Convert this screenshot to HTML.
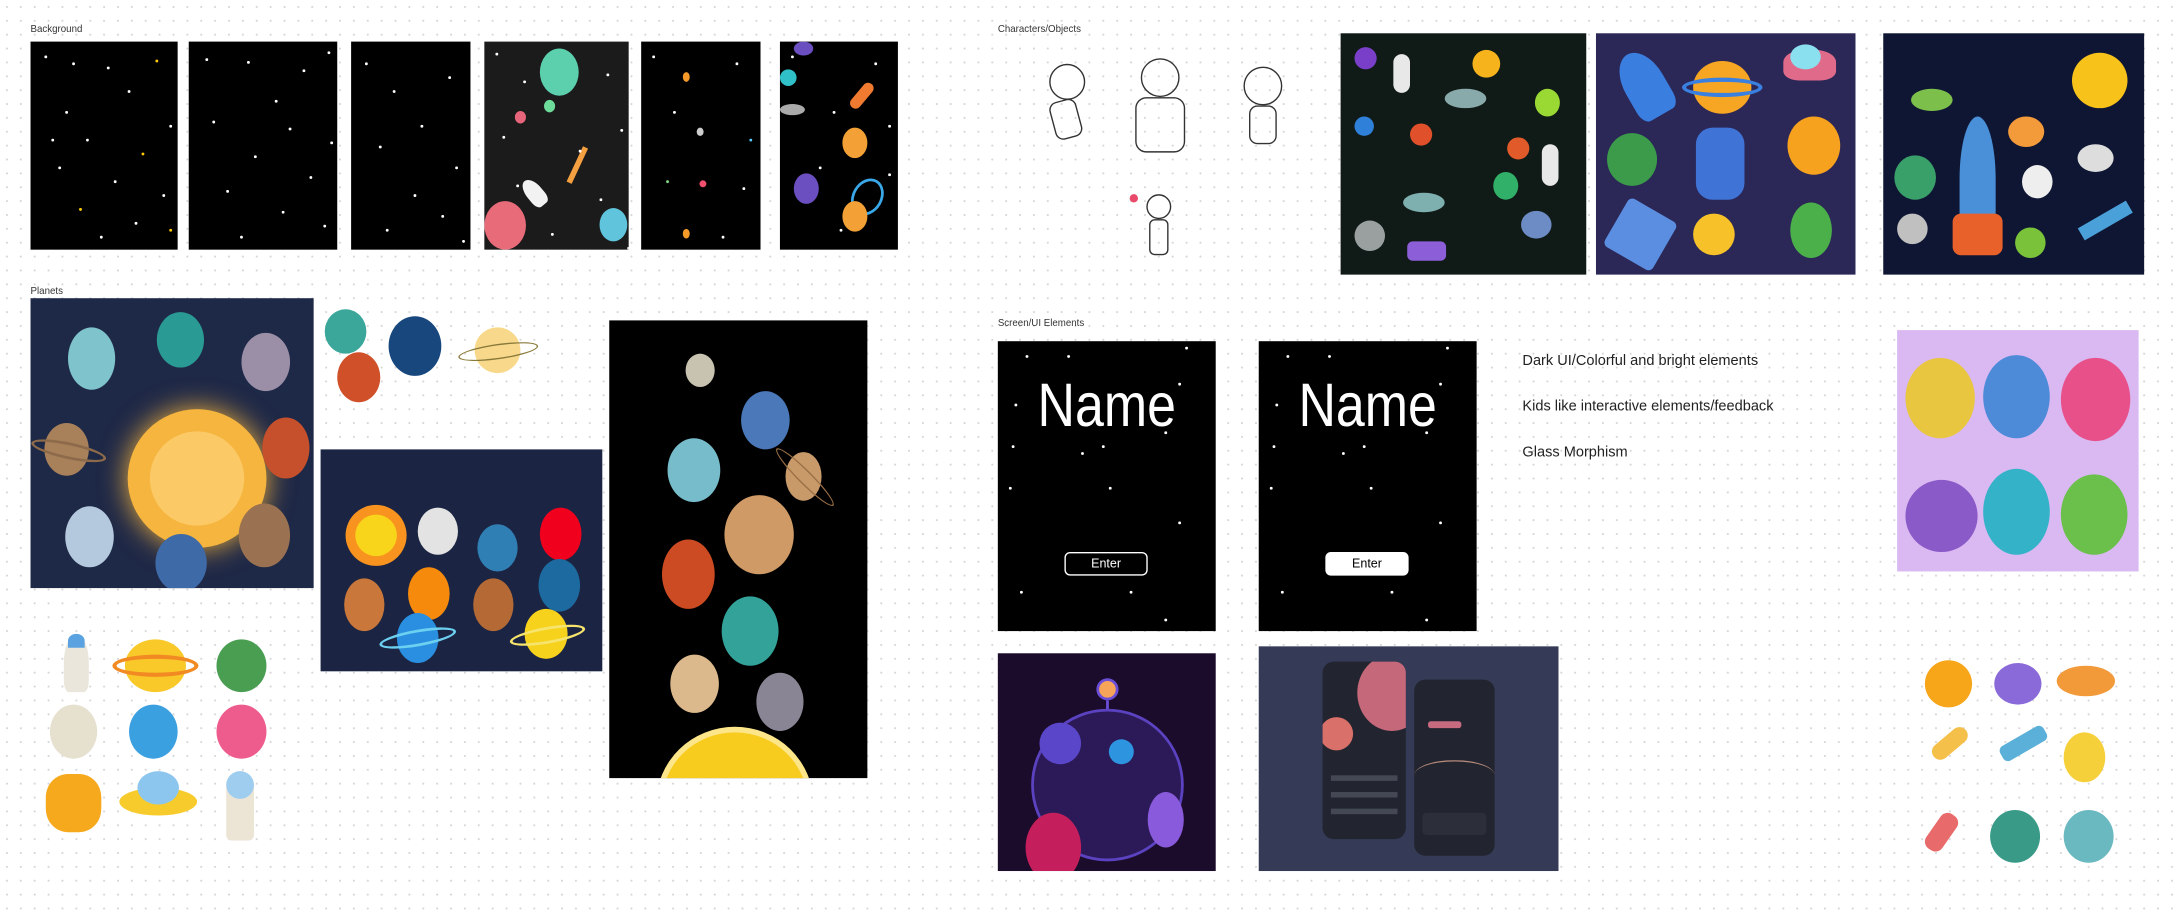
<!DOCTYPE html>
<html><head><meta charset="utf-8"><style>
html,body{margin:0;padding:0;width:2176px;height:914px;overflow:hidden;background:#fff}
#w{position:absolute;left:0;top:0;width:1568px;height:659px;transform:scale(1.3878,1.387);transform-origin:0 0;
background-color:#fff;background-image:radial-gradient(circle,#d6d6d6 0.6px,transparent 0.9px);background-size:10px 10px;font-family:"Liberation Sans",sans-serif}
#w div{position:absolute;box-sizing:border-box}
.lb{font-size:7px;color:#333}
.bk{background:#000;overflow:hidden}
.c{border-radius:50%}
.st{width:1.5px;height:1.5px;background:#fff;border-radius:50%}
.t{font-size:10.5px;color:#222}
</style></head><body><div id="w">

<div class="lb" style="left:22px;top:18px">Background</div>
<div class="lb" style="left:22px;top:207px">Planets</div>
<div class="lb" style="left:719px;top:18px">Characters/Objects</div>
<div class="lb" style="left:719px;top:230px">Screen/UI Elements</div>

<!-- backgrounds -->
<div class="bk" style="left:22px;top:30px;width:106px;height:150px">
 <div class="st" style="left:10px;top:10px;box-shadow:20px 5px #fff,45px 8px #fff,80px 3px #fc0,60px 25px #fff,15px 40px #fff,90px 50px #fff,30px 60px #fff,70px 70px #fc0,10px 80px #fff,50px 90px #fff,85px 100px #fff,25px 110px #fc0,65px 120px #fff,40px 130px #fff,90px 125px #fc0,5px 60px #fff"></div></div>
<div class="bk" style="left:136px;top:30px;width:107px;height:150px">
 <div class="st" style="left:12px;top:12px;box-shadow:30px 2px #fff,70px 8px #fff,88px -5px #fff,50px 30px #fff,5px 45px #fff,90px 60px #fff,35px 70px #fff,75px 85px #fff,15px 95px #fff,55px 110px #fff,85px 120px #fff,25px 128px #fff,60px 50px #fff"></div></div>
<div class="bk" style="left:253px;top:30px;width:86px;height:150px">
 <div class="st" style="left:10px;top:15px;box-shadow:20px 20px #fff,60px 10px #fff,40px 45px #fff,10px 60px #fff,65px 75px #fff,35px 95px #fff,55px 110px #fff,15px 120px #fff,70px 128px #fff"></div></div>
<div class="bk" style="left:349px;top:30px;width:104px;height:150px;background:#1b1b1b">
 <div class="c" style="left:40px;top:5px;width:28px;height:34px;background:#5ccfad"></div>
 <div class="c" style="left:43px;top:42px;width:8px;height:9px;background:#6ddc9a"></div>
 <div class="c" style="left:22px;top:50px;width:8px;height:9px;background:#e7657a"></div>
 <div class="c" style="left:83px;top:120px;width:20px;height:24px;background:#5fc4dc"></div>
 <div class="c" style="left:0px;top:115px;width:30px;height:35px;background:#e86b7a"></div>
 <div style="left:30px;top:98px;width:12px;height:22px;background:#f2f2f2;border-radius:50% 50% 30% 30%;transform:rotate(-40deg)"></div>
 <div style="left:65px;top:75px;width:4px;height:28px;background:#f5a040;transform:rotate(25deg)"></div>
 <div class="st" style="left:8px;top:8px;box-shadow:20px 20px #fff,80px 15px #fff,5px 60px #fff,60px 70px #fff,90px 55px #fff,15px 95px #fff,75px 105px #fff,40px 130px #fff,95px 140px #fff"></div></div>
<div class="bk" style="left:462px;top:30px;width:86px;height:150px">
 <div class="c" style="left:30px;top:22px;width:5px;height:7px;background:#f59a28"></div>
 <div class="c" style="left:42px;top:100px;width:5px;height:5px;background:#f0506e"></div>
 <div class="c" style="left:30px;top:135px;width:5px;height:7px;background:#f59a28"></div>
 <div class="c" style="left:40px;top:62px;width:5px;height:6px;background:#ccc"></div>
 <div class="st" style="left:8px;top:10px;box-shadow:60px 5px #fff,15px 40px #fff,70px 60px #5cf,10px 90px #8d8,65px 95px #fff,50px 130px #fff"></div></div>
<div class="bk" style="left:562px;top:30px;width:85px;height:150px">
 <div class="c" style="left:0px;top:20px;width:12px;height:12px;background:#2fc0c8"></div>
 <div class="c" style="left:45px;top:62px;width:18px;height:22px;background:#f3a137"></div>
 <div class="c" style="left:10px;top:95px;width:18px;height:22px;background:#6b4ec0"></div>
 <div class="c" style="left:52px;top:98px;width:22px;height:28px;border:2px solid #3aa8e8;transform:rotate(30deg)"></div>
 <div class="c" style="left:45px;top:115px;width:18px;height:22px;background:#f3a137"></div>
 <div class="c" style="left:10px;top:0px;width:14px;height:10px;background:#6b4ec0"></div>
 <div style="left:55px;top:28px;width:8px;height:22px;background:#f07a30;transform:rotate(40deg);border-radius:4px"></div>
 <div style="left:0px;top:45px;width:18px;height:8px;background:#aaa;border-radius:50%"></div>
 <div class="st" style="left:8px;top:10px;box-shadow:60px 5px #fff,30px 40px #fff,70px 50px #fff,20px 80px #fff,70px 85px #fff,35px 125px #fff"></div></div>

<!-- planets big -->
<div style="left:22px;top:215px;width:204px;height:209px;background:#1e2847;overflow:hidden">
 <div class="c" style="left:27px;top:21px;width:34px;height:45px;background:#7fc3cc"></div>
 <div class="c" style="left:91px;top:10px;width:34px;height:40px;background:#2a9a94"></div>
 <div class="c" style="left:152px;top:25px;width:35px;height:42px;background:#9a8fa7"></div>
 <div class="c" style="left:70px;top:80px;width:100px;height:100px;background:#f6b53e;box-shadow:0 0 20px #f6b53e"></div>
 <div class="c" style="left:86px;top:96px;width:68px;height:68px;background:#fbc966"></div>
 <div class="c" style="left:10px;top:90px;width:32px;height:38px;background:#a8805a"></div>
 <div class="c" style="left:0px;top:104px;width:55px;height:12px;border:2px solid #8d6b4a;transform:rotate(12deg)"></div>
 <div class="c" style="left:167px;top:86px;width:34px;height:44px;background:#c7502c"></div>
 <div class="c" style="left:25px;top:150px;width:35px;height:44px;background:#b4c9dd"></div>
 <div class="c" style="left:90px;top:170px;width:37px;height:42px;background:#3f6aa8"></div>
 <div class="c" style="left:150px;top:148px;width:37px;height:46px;background:#9b7251"></div>
</div>
<div class="c" style="left:234px;top:223px;width:30px;height:32px;background:#3aa79a"></div>
<div class="c" style="left:280px;top:228px;width:38px;height:43px;background:#17477d"></div>
<div class="c" style="left:243px;top:254px;width:31px;height:36px;background:#d0502a"></div>
<div class="c" style="left:342px;top:236px;width:33px;height:33px;background:#f8d98c"></div>
<div class="c" style="left:330px;top:248px;width:58px;height:11px;border:1.5px solid #8a7a3a;transform:rotate(-8deg)"></div>

<div style="left:231px;top:324px;width:203px;height:160px;background:#1b2543;overflow:hidden">
 <div class="c" style="left:18px;top:40px;width:44px;height:44px;background:#f7931e"></div>
 <div class="c" style="left:25px;top:47px;width:30px;height:30px;background:#f8d41a"></div>
 <div class="c" style="left:70px;top:42px;width:29px;height:34px;background:#e3e3e3"></div>
 <div class="c" style="left:113px;top:54px;width:29px;height:34px;background:#2f7fb5"></div>
 <div class="c" style="left:158px;top:42px;width:30px;height:38px;background:#f0001c"></div>
 <div class="c" style="left:63px;top:85px;width:30px;height:38px;background:#f58a0c"></div>
 <div class="c" style="left:17px;top:93px;width:29px;height:38px;background:#c9773a"></div>
 <div class="c" style="left:110px;top:93px;width:29px;height:38px;background:#b56a35"></div>
 <div class="c" style="left:157px;top:79px;width:30px;height:38px;background:#1d6aa0"></div>
 <div class="c" style="left:55px;top:118px;width:30px;height:36px;background:#2a8fe0"></div>
 <div class="c" style="left:42px;top:130px;width:56px;height:12px;border:2px solid #6cd0f0;transform:rotate(-10deg)"></div>
 <div class="c" style="left:147px;top:115px;width:31px;height:36px;background:#f6d21c"></div>
 <div class="c" style="left:136px;top:128px;width:55px;height:12px;border:2px solid #f6e46c;transform:rotate(-10deg)"></div>
</div>

<div class="bk" style="left:439px;top:231px;width:186px;height:330px">
 <div class="c" style="left:55px;top:24px;width:21px;height:24px;background:#c8c2b0"></div>
 <div class="c" style="left:95px;top:51px;width:35px;height:42px;background:#4a78b8"></div>
 <div class="c" style="left:42px;top:85px;width:38px;height:46px;background:#76bccb"></div>
 <div class="c" style="left:127px;top:95px;width:26px;height:35px;background:#c89a6a"></div>
 <div class="c" style="left:112px;top:108px;width:58px;height:10px;border:1.5px solid #9b6f45;transform:rotate(45deg)"></div>
 <div class="c" style="left:83px;top:126px;width:50px;height:57px;background:#cf9a65"></div>
 <div class="c" style="left:38px;top:158px;width:38px;height:50px;background:#cc4b22"></div>
 <div class="c" style="left:81px;top:199px;width:41px;height:50px;background:#33a39a"></div>
 <div class="c" style="left:44px;top:241px;width:35px;height:42px;background:#dcb98d"></div>
 <div class="c" style="left:106px;top:254px;width:34px;height:42px;background:#8a8595"></div>
 <div class="c" style="left:34px;top:293px;width:113px;height:110px;background:#f8cc1e;border:4px solid #fde58a"></div>
</div>

<!-- small sticker grid -->
<div style="left:46px;top:457px;width:18px;height:42px;background:#eae6dc;border-radius:50% 50% 20% 20%"></div>
<div style="left:49px;top:457px;width:12px;height:10px;background:#5aa3e0;border-radius:50% 50% 0 0"></div>
<div class="c" style="left:90px;top:461px;width:44px;height:38px;background:#f9c929"></div>
<div class="c" style="left:81px;top:472px;width:62px;height:16px;border:3px solid #f28a23"></div>
<div class="c" style="left:156px;top:461px;width:36px;height:38px;background:#4a9e52"></div>
<div class="c" style="left:36px;top:508px;width:34px;height:39px;background:#e6e0cf"></div>
<div class="c" style="left:93px;top:508px;width:35px;height:39px;background:#3aa0e0"></div>
<div class="c" style="left:156px;top:508px;width:36px;height:39px;background:#ee5c8e"></div>
<div style="left:33px;top:558px;width:40px;height:42px;background:#f6a91c;border-radius:40%"></div>
<div class="c" style="left:86px;top:568px;width:56px;height:20px;background:#f7cb2c"></div>
<div class="c" style="left:99px;top:556px;width:30px;height:24px;background:#8cc6ee"></div>
<div style="left:163px;top:556px;width:20px;height:50px;background:#ece5d5;border-radius:10px 10px 4px 4px"></div>
<div class="c" style="left:163px;top:556px;width:20px;height:20px;background:#9fcdf0"></div>

<!-- characters -->
<div class="c" style="left:756px;top:46px;width:26px;height:26px;border:1.2px solid #333;background:#fff"></div>
<div style="left:758px;top:72px;width:20px;height:28px;border:1.2px solid #333;border-radius:6px;transform:rotate(-15deg)"></div>
<div class="c" style="left:822px;top:42px;width:28px;height:28px;border:1.2px solid #333"></div>
<div style="left:818px;top:70px;width:36px;height:40px;border:1.2px solid #333;border-radius:8px"></div>
<div class="c" style="left:896px;top:48px;width:28px;height:28px;border:1.2px solid #333"></div>
<div style="left:900px;top:76px;width:20px;height:28px;border:1.2px solid #333;border-radius:6px"></div>
<div class="c" style="left:826px;top:140px;width:18px;height:18px;border:1.5px solid #333;background:#fff"></div>
<div style="left:828px;top:158px;width:14px;height:26px;border:1.2px solid #333;border-radius:4px"></div>
<div class="c" style="left:814px;top:140px;width:6px;height:6px;background:#e94a6b"></div>

<div style="left:966px;top:24px;width:177px;height:174px;background:#101a17;overflow:hidden">
 <div class="c" style="left:10px;top:10px;width:16px;height:16px;background:#7a3fc8"></div>
 <div style="left:38px;top:15px;width:12px;height:28px;background:#e8e8e8;border-radius:6px"></div>
 <div class="c" style="left:95px;top:12px;width:20px;height:20px;background:#f6b31c"></div>
 <div class="c" style="left:75px;top:40px;width:30px;height:14px;background:#8aa"></div>
 <div class="c" style="left:10px;top:60px;width:14px;height:14px;background:#2f80d8"></div>
 <div class="c" style="left:50px;top:65px;width:16px;height:16px;background:#e0502a"></div>
 <div class="c" style="left:140px;top:40px;width:18px;height:20px;background:#9ad834"></div>
 <div class="c" style="left:120px;top:75px;width:16px;height:16px;background:#e15a2a"></div>
 <div style="left:145px;top:80px;width:12px;height:30px;background:#e8e8e8;border-radius:6px"></div>
 <div class="c" style="left:45px;top:115px;width:30px;height:14px;background:#7fb0b0"></div>
 <div class="c" style="left:110px;top:100px;width:18px;height:20px;background:#31b06a"></div>
 <div class="c" style="left:130px;top:128px;width:22px;height:20px;background:#6d8cc6"></div>
 <div class="c" style="left:10px;top:135px;width:22px;height:22px;background:#9aa0a0"></div>
 <div style="left:48px;top:150px;width:28px;height:14px;background:#8c5fd8;border-radius:4px"></div>
</div>
<div style="left:1150px;top:24px;width:187px;height:174px;background:#2b2756;overflow:hidden">
 <div style="left:20px;top:12px;width:30px;height:50px;background:#3a7ee0;border-radius:50% 50% 20% 20%;transform:rotate(-30deg)"></div>
 <div class="c" style="left:70px;top:20px;width:42px;height:38px;background:#f7a623"></div>
 <div class="c" style="left:62px;top:32px;width:58px;height:14px;border:3px solid #3a80e0"></div>
 <div style="left:135px;top:12px;width:38px;height:22px;background:#e06a8a;border-radius:40% 40% 30% 30%"></div>
 <div class="c" style="left:140px;top:8px;width:22px;height:18px;background:#8be0f0"></div>
 <div class="c" style="left:8px;top:72px;width:36px;height:38px;background:#3b9b4a"></div>
 <div style="left:72px;top:68px;width:35px;height:52px;background:#3f73d6;border-radius:12px"></div>
 <div class="c" style="left:138px;top:60px;width:38px;height:42px;background:#f6a21e"></div>
 <div style="left:12px;top:125px;width:40px;height:40px;background:#5b8ee0;transform:rotate(30deg);border-radius:4px"></div>
 <div class="c" style="left:70px;top:130px;width:30px;height:30px;background:#f7c229"></div>
 <div class="c" style="left:140px;top:122px;width:30px;height:40px;background:#4bb04a"></div>
</div>
<div style="left:1357px;top:24px;width:188px;height:174px;background:#0f1633;overflow:hidden">
 <div class="c" style="left:136px;top:14px;width:40px;height:40px;background:#f7c21a"></div>
 <div class="c" style="left:20px;top:40px;width:30px;height:16px;background:#7cc04b"></div>
 <div style="left:55px;top:60px;width:26px;height:90px;background:#4a90d9;border-radius:50% 50% 10% 10%"></div>
 <div style="left:50px;top:130px;width:36px;height:30px;background:#e8602a;border-radius:6px"></div>
 <div class="c" style="left:8px;top:88px;width:30px;height:32px;background:#3aa06a"></div>
 <div class="c" style="left:10px;top:130px;width:22px;height:22px;background:#c0c0c0"></div>
 <div class="c" style="left:90px;top:60px;width:26px;height:22px;background:#f39a3a"></div>
 <div class="c" style="left:100px;top:95px;width:22px;height:24px;background:#eee"></div>
 <div class="c" style="left:95px;top:140px;width:22px;height:22px;background:#7ac23a"></div>
 <div class="c" style="left:140px;top:80px;width:26px;height:20px;background:#ddd"></div>
 <div style="left:140px;top:130px;width:40px;height:10px;background:#4aa0d8;transform:rotate(-30deg)"></div>
</div>

<!-- screens -->
<div class="bk" style="left:719px;top:246px;width:157px;height:209px">
 <div style="left:0;top:22px;width:157px;text-align:center;color:#fff;font-family:'Liberation Sans Narrow','Liberation Sans',sans-serif;font-size:44px;transform:scaleX(0.85)">Name</div>
 <div style="left:48px;top:152px;width:60px;height:17px;border:1.5px solid #fff;border-radius:4px;color:#fff;font-size:9px;text-align:center;line-height:14px">Enter</div>
 <div class="st" style="left:20px;top:10px;box-shadow:30px 0 #fff,115px -6px #fff,110px 20px #fff,-8px 35px #fff,100px 55px #fff,-12px 95px #fff,40px 70px #fff,55px 65px #fff,-10px 65px #fff,110px 120px #fff,60px 95px #fff,30px 210px #fff,100px 190px #fff,-4px 170px #fff,75px 170px #fff"></div></div>
<div class="bk" style="left:907px;top:246px;width:157px;height:209px">
 <div style="left:0;top:22px;width:157px;text-align:center;color:#fff;font-family:'Liberation Sans Narrow','Liberation Sans',sans-serif;font-size:44px;transform:scaleX(0.85)">Name</div>
 <div style="left:48px;top:152px;width:60px;height:17px;background:#fff;border-radius:4px;color:#000;font-size:9px;text-align:center;line-height:17px">Enter</div>
 <div class="st" style="left:20px;top:10px;box-shadow:30px 0 #fff,115px -6px #fff,110px 20px #fff,-8px 35px #fff,100px 55px #fff,-12px 95px #fff,40px 70px #fff,55px 65px #fff,-10px 65px #fff,110px 120px #fff,60px 95px #fff,30px 210px #fff,100px 190px #fff,-4px 170px #fff,75px 170px #fff"></div></div>

<div class="t" style="left:1097px;top:254px">Dark UI/Colorful and bright elements</div>
<div class="t" style="left:1097px;top:287px">Kids like interactive elements/feedback</div>
<div class="t" style="left:1097px;top:320px">Glass Morphism</div>

<div style="left:1367px;top:238px;width:174px;height:174px;background:#dab8f2;overflow:hidden">
 <div class="c" style="left:6px;top:20px;width:50px;height:58px;background:#e9c640"></div>
 <div class="c" style="left:62px;top:18px;width:48px;height:60px;background:#4d8ad8"></div>
 <div class="c" style="left:118px;top:20px;width:50px;height:60px;background:#e8508a"></div>
 <div class="c" style="left:6px;top:108px;width:52px;height:52px;background:#8a5ac8"></div>
 <div class="c" style="left:62px;top:100px;width:48px;height:62px;background:#33b2c8"></div>
 <div class="c" style="left:118px;top:104px;width:48px;height:58px;background:#6ac04a"></div>
</div>

<div style="left:719px;top:471px;width:157px;height:157px;background:#1b0c2b;overflow:hidden">
 <div class="c" style="left:71px;top:18px;width:16px;height:16px;background:#f5a45a;border:2px solid #6a4ed8"></div>
 <div style="left:78px;top:34px;width:1.5px;height:8px;background:#6a4ed8"></div>
 <div class="c" style="left:24px;top:40px;width:110px;height:110px;background:#2c1a58;border:2px solid #5b42c0"></div>
 <div class="c" style="left:20px;top:115px;width:40px;height:50px;background:#c41e5c"></div>
 <div class="c" style="left:80px;top:62px;width:18px;height:18px;background:#2d95e0"></div>
 <div class="c" style="left:30px;top:50px;width:30px;height:30px;background:#5a46c8"></div>
 <div class="c" style="left:108px;top:100px;width:26px;height:40px;background:#8a5adc"></div>
</div>

<div style="left:907px;top:466px;width:216px;height:162px;background:#353b57;overflow:hidden">
 <div style="left:46px;top:11px;width:60px;height:128px;background:#22252f;border-radius:8px;overflow:hidden">
  <div class="c" style="left:25px;top:-5px;width:50px;height:55px;background:#c5687a"></div>
  <div class="c" style="left:-2px;top:40px;width:24px;height:24px;background:#d9706a"></div>
  <div style="left:6px;top:82px;width:48px;height:4px;background:#444855"></div>
  <div style="left:6px;top:94px;width:48px;height:4px;background:#444855"></div>
  <div style="left:6px;top:106px;width:48px;height:4px;background:#444855"></div>
 </div>
 <div style="left:112px;top:24px;width:58px;height:127px;background:#22252f;border-radius:8px;overflow:hidden">
  <div style="left:10px;top:30px;width:24px;height:5px;background:#c86a80;border-radius:2px"></div>
  <div style="left:0;top:58px;width:58px;height:22px;border-top:1px solid #b58a7a;border-radius:50% 50% 0 0"></div>
  <div style="left:6px;top:96px;width:46px;height:16px;background:#2c2f3a;border-radius:3px"></div>
 </div>
</div>

<!-- bottom right stickers -->
<div class="c" style="left:1387px;top:476px;width:34px;height:34px;background:#f7a61a"></div>
<div class="c" style="left:1437px;top:478px;width:34px;height:30px;background:#8a6ad8"></div>
<div class="c" style="left:1482px;top:480px;width:42px;height:22px;background:#f29a3a"></div>
<div style="left:1390px;top:530px;width:30px;height:12px;background:#f4c04a;transform:rotate(-40deg);border-radius:6px"></div>
<div style="left:1440px;top:530px;width:36px;height:12px;background:#5ab0d8;transform:rotate(-30deg);border-radius:4px"></div>
<div class="c" style="left:1487px;top:528px;width:30px;height:36px;background:#f6d03a"></div>
<div style="left:1392px;top:585px;width:14px;height:30px;background:#e86a6a;transform:rotate(35deg);border-radius:6px"></div>
<div class="c" style="left:1434px;top:584px;width:36px;height:38px;background:#3a9a88"></div>
<div class="c" style="left:1487px;top:584px;width:36px;height:38px;background:#6ab8c0"></div>

</div></body></html>
